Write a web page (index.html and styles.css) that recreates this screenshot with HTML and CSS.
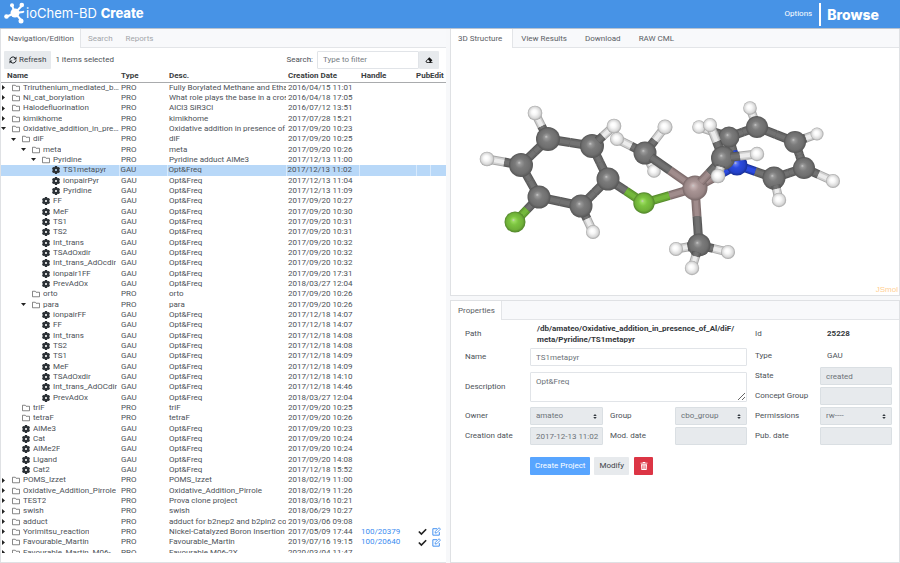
FILE: index.html
```html
<!DOCTYPE html>
<html lang="en">
<head>
<meta charset="utf-8">
<title>ioChem-BD Create</title>
<link rel="stylesheet" href="styles.css">
</head>
<body>
<svg class="sprite" aria-hidden="true">
  <symbol id="i-folder" viewBox="0 0 16 16"><path d="M1 13.5v-11h5.5l1.5 2h7v9z" fill="none" stroke="#555" stroke-width="1.4" stroke-linejoin="round"/></symbol>
  <symbol id="i-gear" viewBox="0 0 16 16"><path fill="#2b3035" fill-rule="evenodd" d="M6 0h4l.7 1.900 1 .5 2.300-.5 2 3.400L14.700 6.900v2.200l1.300 1.600-2 3.400-2.300-.5-1 .5L10 16H6l-.7-1.900-1-.5-2.300.5-2-3.400 1.300-1.600V6.900L0 5.300l2-3.400 2.300.5 1-.5zM8 5.900a2.100 2.100 0 1 0 0 4.200 2.100 2.100 0 0 0 0-4.200z"/></symbol>
  <symbol id="i-right" viewBox="0 0 10 10"><path d="M2 0l6 5-6 5z" fill="#222"/></symbol>
  <symbol id="i-down" viewBox="0 0 10 10"><path d="M0 2h10l-5 6z" fill="#222"/></symbol>
  <symbol id="i-check" viewBox="0 0 16 16"><path d="M1.500 8l4.500 4.500 8.500-8.500" fill="none" stroke="#222" stroke-width="3"/></symbol>
  <symbol id="i-edit" viewBox="0 0 16 16"><path d="M9 3H1.500v11.500H13V9" fill="none" stroke="#3b8cf0" stroke-width="1.700" stroke-linejoin="round"/><path d="M5.500 10.800l.5-3L12.500 1.300l2.500 2.500-6.500 6.500z" fill="none" stroke="#3b8cf0" stroke-width="1.500" stroke-linejoin="round"/></symbol>
  <symbol id="i-sort" viewBox="0 0 8 10"><path d="M4 0l3.500 4H.5zM4 10L.5 6h7z" fill="#343a40"/></symbol>
</svg>

<header class="topbar">
  <svg class="logo" viewBox="0 0 22 22" aria-hidden="true">
    <g stroke="#fff" stroke-width="2"><path d="M11 11L8 3.500M11 11l7-7.500M11 11l-8 3.500M11 11l6.500 7.500M11 11l8-1" fill="none"/></g>
    <g fill="#fff"><circle cx="11" cy="11" r="4.500"/><circle cx="8" cy="3.300" r="2"/><circle cx="17.800" cy="3" r="2.300"/><circle cx="2.500" cy="14.500" r="2.300"/><circle cx="17" cy="19" r="2.500"/><circle cx="19.300" cy="9.700" r="1"/></g>
  </svg>
  <h1 class="brand">ioChem-BD <b>Create</b></h1>
  <nav class="topnav">
    <a class="options" href="#options">Options</a>
    <a class="browse" href="#browse">Browse</a>
  </nav>
</header>

<main class="workspace">
  <section class="panel nav-panel">
    <nav class="tabs tight">
      <a class="tab active" href="#nav">Navigation/Edition</a>
      <a class="tab muted" href="#search">Search</a>
      <a class="tab muted" href="#reports">Reports</a>
    </nav>
    <div class="toolbar">
      <button class="btn refresh" type="button">
        <svg viewBox="0 0 16 16" aria-hidden="true"><path d="M1.700 7.500a6.300 6.300 0 0 1 11-3.500M14.300 8.500a6.300 6.300 0 0 1-11 3.500" fill="none" stroke="#212529" stroke-width="2"/><path d="M15 .8v6H9zM1 15.200v-6h6z" fill="#212529"/></svg>
        Refresh
      </button>
      <span>1 items selected</span>
      <label class="filter-label" for="filter">Search:</label>
      <div class="filter">
        <input id="filter" type="text" placeholder="Type to filter">
        <button class="btn" type="button" aria-label="Clear filter">
          <svg viewBox="0 0 16 16" aria-hidden="true"><path fill="#111" fill-rule="evenodd" d="M8.500 2.500L14.800 8.300 11 12.500h4v1.500H4L.8 11zM6 7L2.800 10.800l2 1.700h3.400l1.500-1.800z"/></svg>
        </button>
      </div>
    </div>
    <div class="tree-scroll">
      <table class="tree">
        <colgroup><col class="c-name"><col class="c-type"><col class="c-desc"><col class="c-date"><col class="c-handle"><col class="c-pub"><col class="c-edit"></colgroup>
        <thead><tr><th>Name</th><th>Type</th><th>Desc.</th><th>Creation Date</th><th>Handle</th><th class="flag">Pub</th><th class="flag">Edit</th></tr></thead>
        <tbody id="rows"></tbody>
      </table>
    </div>
  </section>

  <div class="side">
    <section class="panel">
      <nav class="tabs">
        <a class="tab active" href="#structure">3D Structure</a>
        <a class="tab" href="#results">View Results</a>
        <a class="tab" href="#download">Download</a>
        <a class="tab" href="#cml">RAW CML</a>
      </nav>
      <div class="viewer">
        <svg id="molecule" viewBox="451 48 448 246" role="img" aria-label="3D molecular structure"></svg>
        <span class="credit">JSmol</span>
      </div>
    </section>

    <section class="panel props">
      <nav class="tabs tight"><a class="tab active" href="#properties">Properties</a></nav>
      <form class="form">
        <div class="form-main">
          <span>Path</span>
          <strong class="wide path">/db/amateo/Oxidative_addition_in_presence_of_Al/diF/<wbr>meta/Pyridine/TS1metapyr</strong>
          <label for="name">Name</label>
          <input class="wide" id="name" type="text" value="TS1metapyr">
          <label for="description">Description</label>
          <textarea class="wide" id="description">Opt&amp;Freq</textarea>
          <label for="owner">Owner</label>
          <div class="pick"><select id="owner" disabled><option>amateo</option></select><svg aria-hidden="true"><use href="#i-sort"/></svg></div>
          <label class="second" for="group">Group</label>
          <div class="pick"><select id="group" disabled><option>cbo_group</option></select><svg aria-hidden="true"><use href="#i-sort"/></svg></div>
          <label for="created">Creation date</label>
          <input id="created" type="text" value="2017-12-13 11:02" disabled>
          <label class="second" for="modified">Mod. date</label>
          <input id="modified" type="text" disabled>
        </div>
        <div class="form-extra">
          <span>Id</span><strong class="value">25228</strong>
          <span>Type</span><span class="value">GAU</span>
          <label for="state">State</label><input id="state" type="text" value="created" disabled>
          <label for="concept">Concept Group</label><input id="concept" type="text" disabled>
          <label for="permissions">Permissions</label>
          <div class="pick"><select id="permissions" disabled><option>rw----</option></select><svg aria-hidden="true"><use href="#i-sort"/></svg></div>
          <label for="published">Pub. date</label><input id="published" type="text" disabled>
        </div>
        <div class="actions">
          <button class="btn primary" type="button">Create Project</button>
          <button class="btn" type="button">Modify</button>
          <button class="btn danger" type="button" aria-label="Delete">
            <svg viewBox="0 0 14 16" aria-hidden="true"><path fill="#fff" fill-rule="evenodd" d="M0 1.500h4L5 0h4l1 1.500h4v1.700H0zM1 4.500h12L12.300 16H1.700zM4 6.500v7.500h1.200V6.500zm2.400 0v7.500h1.200V6.500zm2.400 0v7.500H10V6.500z"/></svg>
          </button>
        </div>
      </form>
    </section>
  </div>
</main>
<script src="app.js"></script>
</body>
</html>
```
FILE: styles.css
```css
* { box-sizing: border-box; }

body {
  margin: 0;
  min-height: 100vh;
  display: flex;
  flex-direction: column;
  background: #f7f8fa;
  color: #4c5157;
  font: 8px/10px Roboto, "Liberation Sans", sans-serif;
}

a { color: inherit; text-decoration: none; }
.sprite { display: none; }

.topbar {
  display: flex;
  align-items: center;
  height: 29px;
  padding: 0 21px 0 4px;
  background: #4793e6;
  border-bottom: 1px solid #b9c3d0;
  color: #fff;
}
.logo { width: 22px; height: 22px; margin-top: -3px; }
.brand { margin: 0 0 3px; font: 400 13px/16px Inter, "Open Sans", sans-serif; }
.brand b { font-weight: 800; }
.topnav { display: flex; align-items: center; gap: 7px; margin-left: auto; }
.browse {
  padding-left: 6px;
  border-left: 2px solid #fff;
  font: 800 14px/23px Inter, "Open Sans", sans-serif;
}

.workspace {
  flex: 1;
  display: grid;
  grid-template-columns: minmax(0, 446fr) minmax(0, 450fr);
  gap: 4px;
}
.panel {
  display: flex;
  flex-direction: column;
  background: #fff;
  border: 1px solid #dfe1e4;
  border-top: 0;
}
.nav-panel { border-right: 0; }
.side { display: flex; flex-direction: column; gap: 4px; }
.props { flex: 1; border-top: 1px solid #dfe1e4; }

.tabs {
  display: flex;
  height: 19px;
  background: #f8f9fb;
  border-bottom: 1px solid #e3e5e8;
}
.tab { padding: 0 10px 0 8px; line-height: 19px; color: #5b6065; }
.tight .tab { padding: 0 6px 0 7px; }
.tabs .tab.active {
  height: 19px;
  padding-left: 7px;
  background: #fff;
  border-right: 1px solid #e3e5e8;
}
.tab.muted { color: #a3a6aa; }

input, select, textarea, button { font: inherit; color: inherit; margin: 0; }
input, select, textarea {
  width: 100%;
  min-width: 0;
  height: 18px;
  padding: 0 0 0 5px;
  border: 1px solid #e1e4e8;
  border-radius: 1px;
  background: #fff;
  color: #6c7278;
}
input::placeholder { color: #767c82; opacity: 1; }
input:disabled, select:disabled {
  background: #e7eaed;
  border-color: #dadfe3;
  color: #6c7278;
  opacity: 1;
}
select { appearance: none; }
textarea { display: block; height: 30px; padding: 4px 5px; resize: vertical; }

.btn {
  display: inline-flex;
  align-items: center;
  justify-content: center;
  gap: 2px;
  height: 18px;
  padding: 0 5px;
  border: 0;
  border-radius: 1px;
  background: #e7eaed;
  color: #3c4247;
}
.btn svg { flex: none; width: 8px; height: 8px; }

.toolbar {
  display: flex;
  align-items: center;
  gap: 4px;
  height: 23px;
  padding: 0 7px 0 3px;
}
.filter-label { margin-left: auto; }
.filter { display: flex; width: 122px; }
.filter .btn { width: 20px; flex: none; }

.tree-scroll { flex: 1 1 0; overflow: hidden; margin-bottom: 9px; }
.tree { width: 100%; table-layout: fixed; border-collapse: collapse; }
.c-name { width: 118px; }
.c-type { width: 48px; }
.c-date { width: 73px; }
.c-handle { width: 57px; }
.c-pub { width: 14px; }
.c-edit { width: 16px; }
.tree th {
  height: 11px;
  padding: 0 0 0 2px;
  border-bottom: 1px solid #a9abad;
  font-weight: 700;
  line-height: 10px;
  text-align: left;
  color: #3a3d40;
  white-space: nowrap;
}
.tree th:first-child { padding-left: 6px; }
.tree th.flag { padding-left: 0; }
.tree td {
  height: 10px;
  padding: 0 0 0 2px;
  overflow: hidden;
  white-space: nowrap;
}
.tree tbody tr:nth-child(3n) td { height: 11px; }
.tree td:first-child { padding-left: 0; }
.tree .selected td { background: #b8d8f8; border-left: 1px solid #d9eafc; padding-left: 1px; }
.tree .selected td:first-child { border-left: 0; padding-left: 0; }
.node { display: flex; align-items: center; height: 10px; }
.node .arrow { flex: none; width: 5px; height: 5px; margin-right: 6px; }
.node .icon { flex: none; width: 8px; height: 8px; margin-right: 3px; }
.node .name { overflow: hidden; text-overflow: ellipsis; }
.tree td a { color: #3b8cf0; }
.mark { display: block; width: 9px; height: 9px; }

.viewer { position: relative; padding-bottom: 1px; }
.viewer svg { display: block; width: 100%; }
.credit {
  position: absolute;
  right: 1px;
  bottom: 0;
  color: #ffcf94;
  font-family: "Liberation Sans", sans-serif;
}

.form {
  display: grid;
  grid-template-columns: minmax(0, 282fr) minmax(0, 137fr);
  gap: 12px 8px;
  padding: 3px 7px 8px 14px;
}
.form-main, .form-extra { display: grid; align-items: center; gap: 2px 0; }
.form-main {
  grid-template-columns: 65fr 73fr 72fr 72fr;
  grid-template-rows: 22px 20px 36px 18px 18px;
}
.form-extra {
  grid-template-columns: 65fr 72fr;
  grid-template-rows: 22px 18px 18px 18px 18px 18px;
}
.wide { grid-column: 2 / -1; }
.path { padding-left: 7px; line-height: 11px; color: #34383c; overflow-wrap: anywhere; }
.second { padding-left: 7px; }
.value { padding-left: 7px; }
strong { color: #34383c; }
.pick { display: grid; align-items: center; }
.pick select, .pick svg { grid-area: 1 / 1; }
.pick svg { justify-self: end; width: 4px; height: 5px; margin-right: 6px; pointer-events: none; }

.actions { display: flex; gap: 4px; padding-left: 65px; }
.btn.primary { background: #58a5ff; color: #fff; }
.btn.danger { width: 19px; margin-left: 1px; background: #dc3545; }
```
FILE: app.js
```js
// Tree rows: level | state (r closed, d open, - leaf) | kind | name | description | date | handle
const tree = `0|r|P|Triruthenium_mediated_borylation|Fully Borylated Methane and Ethane by Ruthenium|2016/04/15 11:01
0|r|P|Ni_cat_borylation|What role plays the base in a cross-coupling|2016/04/18 17:05
0|r|P|Halodefluorination|AlCl3 SiR3Cl|2016/07/12 13:51
0|r|P|kimikhome|kimikhome|2017/07/28 15:21
0|d|P|Oxidative_addition_in_presence_of_Al|Oxidative addition in presence of Al|2017/09/20 10:23
1|d|P|diF|diF|2017/09/20 10:25
2|d|P|meta|meta|2017/09/20 10:26
3|d|P|Pyridine|Pyridine adduct AlMe3|2017/12/13 11:00
4|-|G|TS1metapyr||2017/12/13 11:02
4|-|G|ionpairPyr||2017/12/13 11:04
4|-|G|Pyridine||2017/12/13 11:09
3|-|G|FF||2017/09/20 10:27
3|-|G|MeF||2017/09/20 10:30
3|-|G|TS1||2017/09/20 10:31
3|-|G|TS2||2017/09/20 10:31
3|-|G|Int_trans||2017/09/20 10:32
3|-|G|TSAdOxdir||2017/09/20 10:32
3|-|G|Int_trans_AdOcdir||2017/09/20 10:32
3|-|G|ionpair1FF||2017/09/20 17:31
3|-|G|PrevAdOx||2018/03/27 12:04
2|-|P|orto|orto|2017/09/20 10:26
2|d|P|para|para|2017/09/20 10:26
3|-|G|ionpairFF||2017/12/18 14:07
3|-|G|FF||2017/12/18 14:07
3|-|G|Int_trans||2017/12/18 14:08
3|-|G|TS2||2017/12/18 14:08
3|-|G|TS1||2017/12/18 14:09
3|-|G|MeF||2017/12/18 14:09
3|-|G|TSAdOxdir||2017/12/18 14:10
3|-|G|Int_trans_AdOCdir||2017/12/18 14:46
3|-|G|PrevAdOx||2018/03/27 12:04
1|-|P|triF|triF|2017/09/20 10:25
1|-|P|tetraF|tetraF|2017/09/20 10:26
1|-|G|AlMe3||2017/09/20 10:23
1|-|G|Cat||2017/09/20 10:24
1|-|G|AlMe2F||2017/09/20 10:24
1|-|G|Ligand||2017/09/20 14:08
1|-|G|Cat2||2017/12/18 15:52
0|r|P|POMS_Izzet|POMS_Izzet|2018/02/19 11:00
0|r|P|Oxidative_Addition_Pirrole|Oxidative_Addition_Pirrole|2018/02/19 11:26
0|r|P|TEST2|Prova clone project|2018/03/16 10:21
0|r|P|swish|swish|2018/06/29 10:27
0|r|P|adduct|adduct for b2nep2 and b2pin2 compounds|2019/03/06 09:08
0|r|P|Yorimitsu_reaction|Nickel-Catalyzed Boron Insertion into|2017/05/09 17:44|100/20379
0|r|P|Favourable_Martin|Favourable_Martin|2019/07/16 19:15|100/20640
0|r|P|Favourable_Martin_M06-2X|Favourable M06-2X|2020/03/04 11:47`;

const use = (cls, id) => `<svg class="${cls}" aria-hidden="true"><use href="#${id}"/></svg>`;

document.getElementById('rows').innerHTML = tree.split('\n').map(line => {
  const [level, state, kind, name, desc, date, handle] = line.split('|');
  const arrow = state === '-' ? '<span class="arrow"></span>' : use('arrow', state === 'd' ? 'i-down' : 'i-right');
  const icon = use('icon', kind === 'P' ? 'i-folder' : 'i-gear');
  return `<tr${name === 'TS1metapyr' ? ' class="selected"' : ''}>
    <td><div class="node" style="padding-left:${level * 10}px">${arrow}${icon}<span class="name">${name}</span></div></td>
    <td>${kind === 'P' ? 'PRO' : 'GAU'}</td>
    <td>${kind === 'P' ? desc : 'Opt&amp;Freq'}</td>
    <td>${date}</td>
    <td>${handle ? `<a href="#${handle}">${handle}</a>` : ''}</td>
    <td>${handle ? use('mark', 'i-check') : ''}</td>
    <td>${handle ? use('mark', 'i-edit') : ''}</td></tr>`;
}).join('');

// Per element: sphere highlight, body, shade, rim, then bond edge, middle, centre
const shades = {
  C: ['#989898', '#7b7b7b', '#6e6e6e', '#555555', '#565656', '#666666', '#727272'],
  H: ['#ffffff', '#f6f6f6', '#d8d8d8', '#a2a2a2', '#a8a8a8', '#d0d0d0', '#ececec'],
  F: ['#9bdc60', '#7cc440', '#6fb038', '#50832a', '#568c2b', '#67a434', '#74b83c'],
  N: ['#5f78f5', '#2a4ae0', '#2341c8', '#182f94', '#1b3399', '#2340c6', '#2b4be2'],
  A: ['#c4b0b0', '#a89494', '#988585', '#776767', '#7c6b6b', '#907c7c', '#a08c8c']
};

// Atom: element, x, y, radius
const atoms = {
  Ha: ['H', 535, 113, 7.3], C1: ['C', 548, 139, 12], Hb: ['H', 487, 159, 7.3], C2: ['C', 521, 165, 12],
  C3: ['C', 539, 197, 11.5], F1: ['F', 515, 222, 10.5], C4: ['C', 581, 206, 11.5], Hc: ['H', 593, 232, 7],
  C5: ['C', 608, 179, 11.5], C6: ['C', 592, 146, 12], Hd: ['H', 614, 126, 7.3], F2: ['F', 644, 203, 10.7],
  C7: ['C', 645, 153, 11.5], He: ['H', 665, 127, 7.5], Hf: ['H', 617, 139, 7], Hg: ['H', 654, 171, 6.8],
  Al: ['A', 695, 188, 12.5], N: ['N', 737, 165, 10.5], C8: ['C', 729, 137, 10.5], C9: ['C', 757, 127, 11],
  Hh: ['H', 750, 108, 6.8], Ci: ['C', 795, 142, 11], Hi: ['H', 817, 134, 6.5], Cj: ['C', 804, 168, 11],
  Hj: ['H', 833, 181, 7], Ck: ['C', 774, 178, 11.5], Hk: ['H', 779, 200, 7.2], Hl: ['H', 699, 127, 6.8],
  Cm: ['C', 723, 158, 12], Hm: ['H', 710, 125, 7], Hn: ['H', 757, 154, 7.2], Ho: ['H', 718, 176, 7.3],
  Cn: ['C', 699, 245, 11.5], Hp: ['H', 676, 249, 7], Hq: ['H', 692, 268, 7.2], Hr: ['H', 728, 252, 7]
};

// Painted back to front; a pair joined by "-" is a bond
const scene = `C9-Hh Hh C8-Hl Hl C8-C9 C8-N C8 C9-Ci C9 Ci-Hi Hi Ci-Cj Ci N-Ck Al-N N Cj-Ck Cj-Hj Hj Cj Ck Ck-Hk Hk
C7-Hg Hg C1-Ha Ha C1-C6 C1-C2 C1 C2-Hb Hb C2-C3 C2 C6-C5 C6 C6-Hd C7-Hf Hf Hd C7-He He C7 C7-Al C3-F1 C3-C4 C3 F1
C4-Hc Hc C5-C4 C4 C5-F2 C5 F2-Al F2 Al-Cn Al Al-Cm Cm-Hm Cm Cm-Hn Hm Hn Cm-Ho Ho
Cn-Hp Hp Cn-Hr Hr Cn Cn-Hq Hq`.split(/\s+/);

const stroke = (x1, y1, x2, y2, el) =>
  [9, 7, 4].map((width, i) =>
    `<path d="M${x1} ${y1}L${x2} ${y2}" stroke="${shades[el][4 + i]}" stroke-width="${width}"/>`
  ).join('');

let art = '<defs>' + Object.entries(shades).map(([el, s]) =>
  `<radialGradient id="g${el}" fx=".42" fy=".4"><stop offset="0" stop-color="${el === 'H' ? '#fff' : '#c8c8c8'}"/><stop offset=".14" stop-color="${s[0]}"/><stop offset=".4" stop-color="${s[1]}"/><stop offset=".78" stop-color="${s[2]}"/><stop offset="1" stop-color="${s[3]}"/></radialGradient>`
).join('') + '</defs>';

for (const item of scene) {
  const [p, q] = item.split('-');
  const [el, x, y, r] = atoms[p];
  if (q) {
    // The bond leaves the first atom part way out from its centre
    const [el2, x2, y2] = atoms[q];
    const t = r * 0.65 / Math.hypot(x2 - x, y2 - y);
    const sx = x + (x2 - x) * t, sy = y + (y2 - y) * t;
    const mx = (x + x2) / 2, my = (y + y2) / 2;
    art += stroke(sx, sy, mx, my, el) + stroke(mx, my, x2, y2, el2);
  } else {
    art += `<circle cx="${x}" cy="${y}" r="${r}" fill="url(#g${el})"/>`;
  }
}
document.getElementById('molecule').innerHTML = art;
```
